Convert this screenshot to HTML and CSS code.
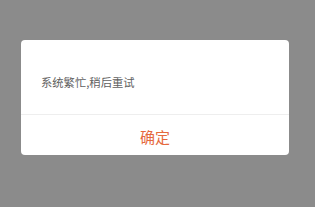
FILE: index.html
```html
<!DOCTYPE html>
<html lang="zh-CN">

<head>
    <meta charset="UTF-8">
    <meta name="viewport" content="width=device-width, initial-scale=1.0">
    <title>提示</title>
    <link rel="stylesheet" href="styles.css">
</head>

<body>
    <!-- 弹窗 -->
    <div class="dialog">
        <div class="dialog-msg">系统繁忙,稍后重试</div>
        <div class="dialog-btn">确定</div>
    </div>
</body>

</html>
```

FILE: styles.css
```css
body {
    margin: 0;
    height: 207px;
    background-color: #8b8b8b;
    font-family: "Noto Sans CJK SC", "Noto Sans", sans-serif;
    overflow: hidden;
    padding: 40px 0 0 21px;
    box-sizing: border-box;
}

.dialog {
    width: 268px;
    height: 115px;
    background-color: #fff;
    border-radius: 4px;
    display: flex;
    flex-direction: column;
}

.dialog-msg {
    height: 75px;
    padding-left: 20px;
    display: flex;
    align-items: center;
    font-size: 11.3px;
    color: #606060;
    border-bottom: 1px solid #eee;
    box-sizing: border-box;
    padding-top: 9px;
}

.dialog-btn {
    flex: 1;
    display: flex;
    justify-content: center;
    align-items: center;
    font-size: 15px;
    color: #e5693d;
    padding-top: 2px;
}
```
